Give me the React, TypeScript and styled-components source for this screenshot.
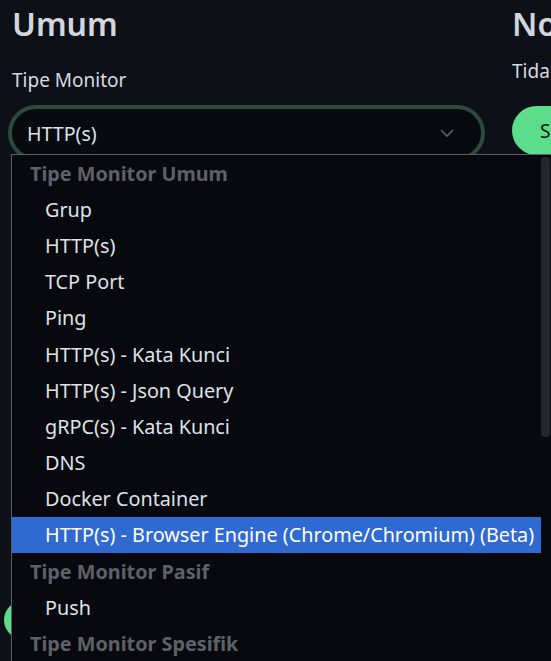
import React from "react";
import styled, { createGlobalStyle } from "styled-components";

const GlobalStyle = createGlobalStyle`
  html, body {
    margin: 0;
    padding: 0;
    background: #0d1117;
    overflow: hidden;
  }
  body {
    font-family: "Noto Sans", "Open Sans", sans-serif;
    color: #d6dae0;
  }
`;

const Page = styled.div`
  position: relative;
  width: 551px;
  height: 661px;
  overflow: hidden;
  display: grid;
  grid-template-columns: 488px 300px;
  column-gap: 12px;
  padding-left: 12px;
  box-sizing: border-box;
`;

const Column = styled.div`
  display: flex;
  flex-direction: column;
`;

const Heading = styled.h1`
  margin: 4px 0 0;
  font-size: 32px;
  font-weight: 600;
  line-height: 40px;
  color: #d3d7dd;
`;

const Label = styled.label`
  margin-top: 23px;
  font-size: 19px;
  line-height: 26px;
  color: #d6dae0;
`;

const Hint = styled.p`
  margin: 14px 0 0;
  font-size: 19px;
  line-height: 26px;
  color: #d6dae0;
  white-space: nowrap;
`;

const SelectBox = styled.div`
  margin: 12px 0 0 -4px;
  width: 477px;
  height: 56px;
  box-sizing: border-box;
  border: 4px solid #2b4a3b;
  border-radius: 28px;
  background: #070a0f;
  display: flex;
  align-items: center;
  justify-content: space-between;
  padding: 0 26px 0 15px;
  font-size: 19.6px;
  color: #dde1e6;
`;

const GreenButton = styled.button`
  margin-top: 22px;
  height: 49px;
  padding: 0 28px;
  align-self: flex-start;
  border: none;
  border-radius: 25px;
  background: #5cdd8b;
  color: #0d1117;
  font-family: inherit;
  font-size: 19px;
  white-space: nowrap;
`;

const Toggle = styled.div`
  margin: 440px 0 0 -8px;
  width: 40px;
  height: 38px;
  border-radius: 19px;
  background: #5cdd8b;
`;

const Dropdown = styled.div`
  position: absolute;
  left: 11px;
  top: 154px;
  width: 545px;
  height: 520px;
  box-sizing: border-box;
  border-top: 1px solid #5a5e64;
  border-left: 1px solid #5a5e64;
  background: #07090e;
  display: flex;
`;

const List = styled.div`
  flex: 1;
  display: flex;
  flex-direction: column;
`;

const Scrollbar = styled.div`
  width: 9px;
  margin-right: 6px;
  padding-top: 2px;
  display: flex;
  flex-direction: column;
`;

const Thumb = styled.div`
  height: 280px;
  border-radius: 4px;
  background: #23272f;
`;

const Row = styled.div<{ $group?: boolean; $active?: boolean }>`
  height: 36.2px;
  display: flex;
  align-items: center;
  padding-left: ${(p) => (p.$group ? "18px" : "33px")};
  font-size: 19.8px;
  font-weight: ${(p) => (p.$group ? 700 : 400)};
  color: ${(p) => (p.$group ? "#5d6168" : p.$active ? "#ffffff" : "#dfe2e6")};
  background: ${(p) => (p.$active ? "#2f69d2" : "transparent")};
  white-space: nowrap;
`;

const Chevron = () => (
  <svg width="16" height="10" viewBox="0 0 16 10" fill="none">
    <path d="M2 2l6 6 6-6" stroke="#5c6068" strokeWidth="1.6" />
  </svg>
);

type Item = { label: string; group?: boolean; active?: boolean };

const items: Item[] = [
  { label: "Tipe Monitor Umum", group: true },
  { label: "Grup" },
  { label: "HTTP(s)" },
  { label: "TCP Port" },
  { label: "Ping" },
  { label: "HTTP(s) - Kata Kunci" },
  { label: "HTTP(s) - Json Query" },
  { label: "gRPC(s) - Kata Kunci" },
  { label: "DNS" },
  { label: "Docker Container" },
  { label: "HTTP(s) - Browser Engine (Chrome/Chromium) (Beta)", active: true },
  { label: "Tipe Monitor Pasif", group: true },
  { label: "Push" },
  { label: "Tipe Monitor Spesifik", group: true },
];

const App = () => {
  return (
    <>
      <GlobalStyle />
      <Page>
        <Column>
          <Heading>Umum</Heading>
          <Label>Tipe Monitor</Label>
          <SelectBox>
            <span>HTTP(s)</span>
            <Chevron />
          </SelectBox>
          <Toggle />
        </Column>
        <Column>
          <Heading>Notifikasi</Heading>
          <Hint>Tidak ada notifikasi yang diatur</Hint>
          <GreenButton>Siapkan Notifikasi</GreenButton>
        </Column>
        <Dropdown>
          <List>
            {items.map((item, i) => (
              <Row key={i} $group={item.group} $active={item.active}>
                {item.label}
              </Row>
            ))}
          </List>
          <Scrollbar>
            <Thumb />
          </Scrollbar>
        </Dropdown>
      </Page>
    </>
  );
};

export default App;
